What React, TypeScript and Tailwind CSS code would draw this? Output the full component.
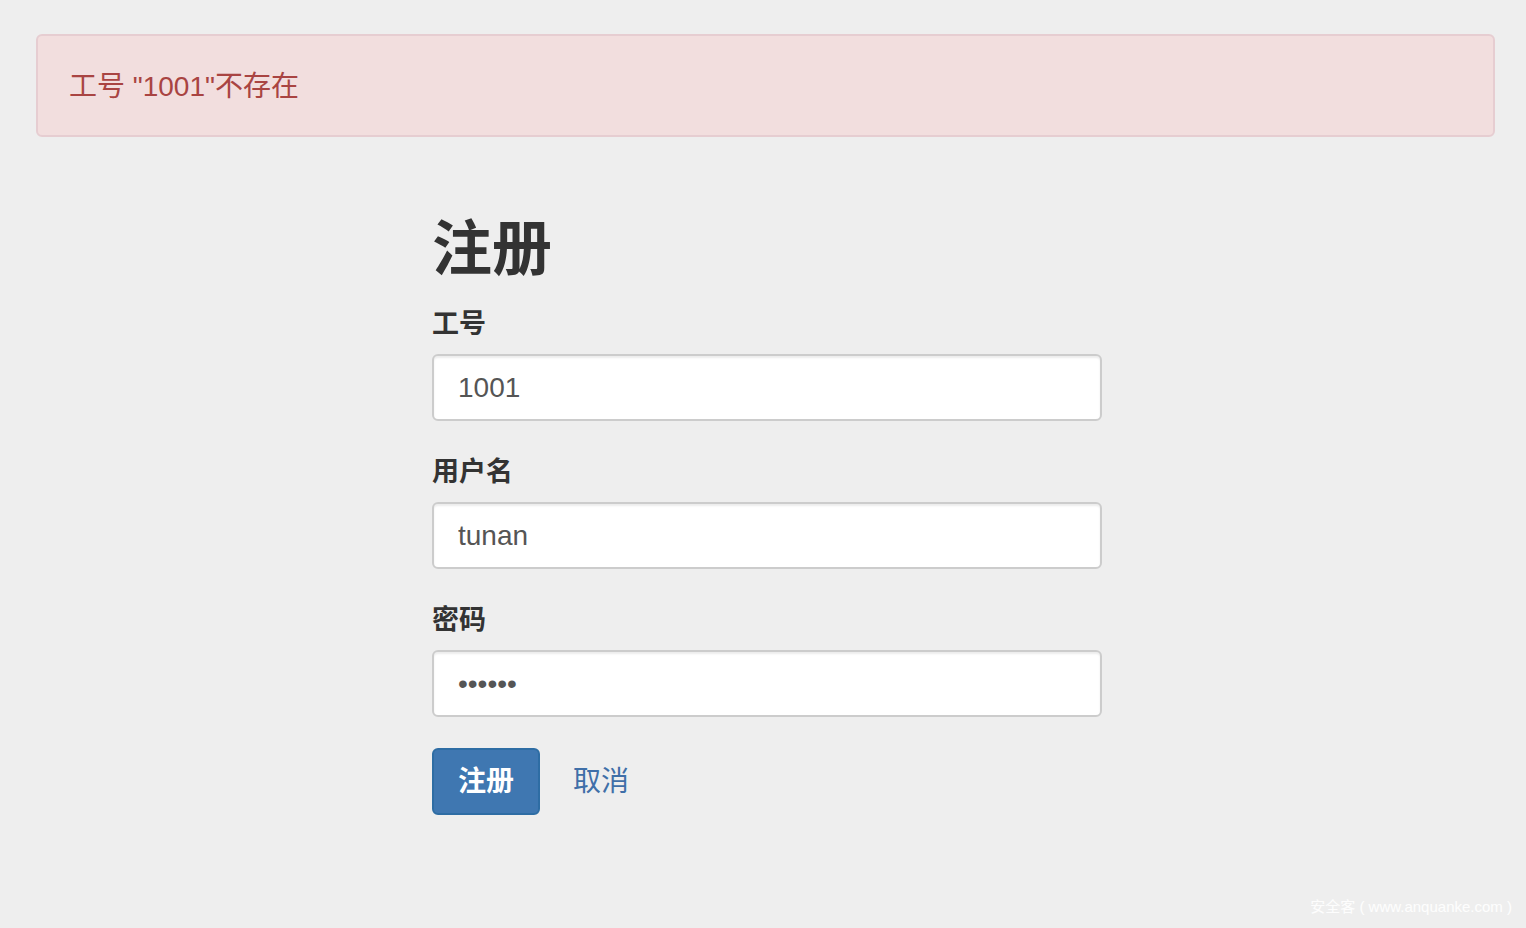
import { useState } from 'react';

const FONT = '"Liberation Sans", "Noto Sans CJK SC", sans-serif';

interface FieldProps {
  label: string;
  value: string;
  type?: string;
  onChange: (v: string) => void;
}

function Field({ label, value, type = 'text', onChange }: FieldProps) {
  return (
    <div className="flex flex-col">
      <label className="mb-3 text-[27px] leading-[36px] font-bold text-[#333]">{label}</label>
      <input
        type={type}
        value={value}
        onChange={(e) => onChange(e.target.value)}
        className="h-[67px] w-full rounded-[6px] border-2 border-[#ccc] bg-white px-6 text-[28px] text-[#555] shadow-[inset_0_2px_2px_rgba(0,0,0,0.075)] outline-none"
        style={{ fontFamily: FONT }}
      />
    </div>
  );
}

export default function App() {
  const [empNo, setEmpNo] = useState('1001');
  const [username, setUsername] = useState('tunan');
  const [password, setPassword] = useState('123456');

  return (
    <div
      className="relative min-h-screen bg-[#eee] pt-[34px] pr-[31px] pl-9"
      style={{ fontFamily: FONT }}
    >
      <div className="flex h-[103px] items-center rounded-[6px] border-2 border-[#e6cdd1] bg-[#f2dede] pt-[2px] pl-[31px] text-[28px] text-[#a94442]">
        工号 "1001"不存在
      </div>

      <div className="ml-[396px] w-[670px]">
        <h1 className="mt-20 text-[60px] leading-[66px] font-bold text-[#333]">注册</h1>

        <div className="mt-[23px] flex flex-col gap-[33px]">
          <Field label="工号" value={empNo} onChange={setEmpNo} />
          <Field label="用户名" value={username} onChange={setUsername} />
          <Field label="密码" value={password} type="password" onChange={setPassword} />
        </div>

        <div className="mt-[31px] flex items-center gap-[33px]">
          <button className="h-[67px] w-[108px] rounded-[6px] border-2 border-[#2e6da4] bg-[#3f77b1] text-[28px] font-bold text-white">
            注册
          </button>
          <a href="#" className="text-[28px] text-[#3f6fa8]">
            取消
          </a>
        </div>
      </div>

      <div className="absolute right-[14px] bottom-[10px] text-[15px] text-white/90">
        安全客 ( www.anquanke.com )
      </div>
    </div>
  );
}
